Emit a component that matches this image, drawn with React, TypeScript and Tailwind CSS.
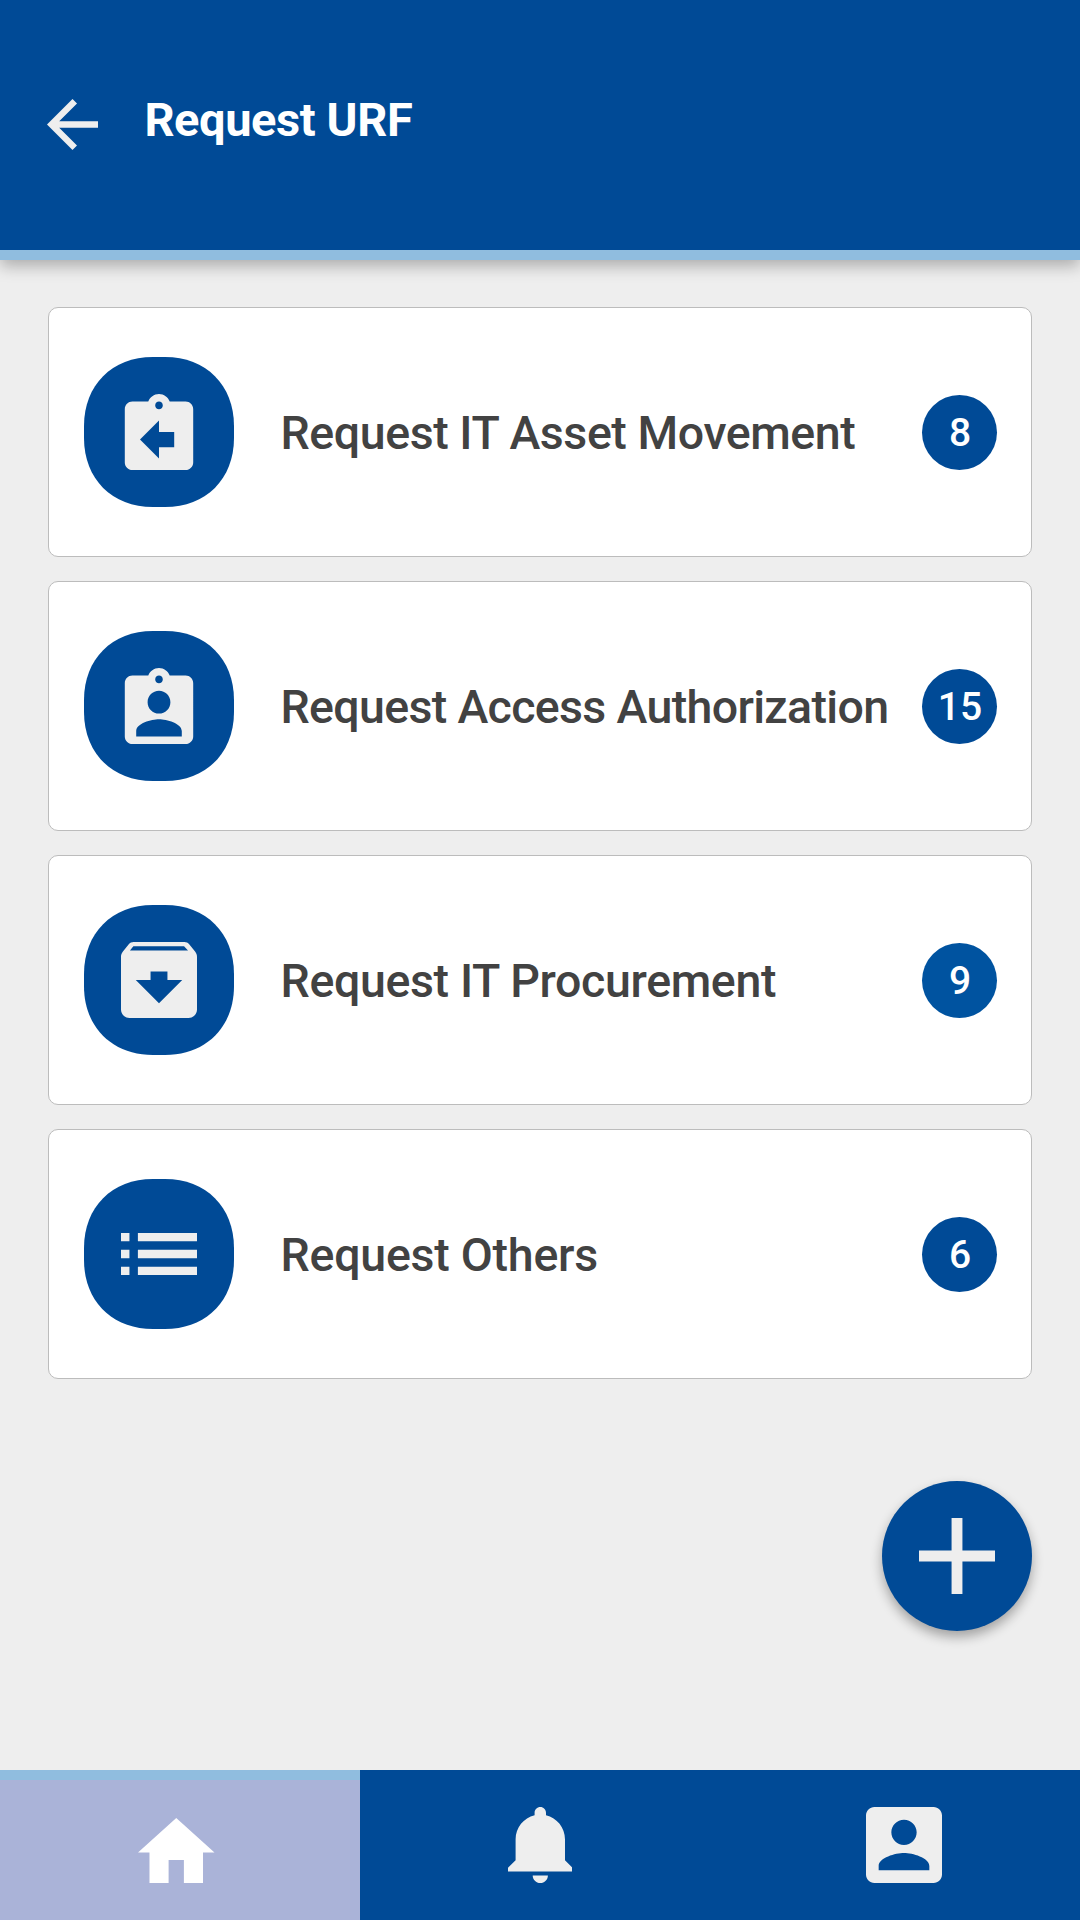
import React from "react";

const FONT = "font-['Roboto','Noto_Sans',sans-serif]";

type GlyphProps = { viewBox: string; d: string; className: string };

function Glyph({ viewBox, d, className }: GlyphProps) {
  return (
    <svg viewBox={viewBox} className={className} fill="currentColor" aria-hidden="true">
      <path d={d} />
    </svg>
  );
}

const CLIP =
  "M19 3h-4.18C14.4 1.84 13.3 1 12 1c-1.3 0-2.4.84-2.82 2H5c-1.1 0-2 .9-2 2v14c0 1.1.9 2 2 2h14c1.1 0 2-.9 2-2V5c0-1.1-.9-2-2-2zm-7 0c.55 0 1 .45 1 1s-.45 1-1 1-1-.45-1-1 .45-1 1-1z";

const items = [
  {
    label: "Request IT Asset Movement",
    count: 8,
    viewBox: "2 1 20 20",
    d: CLIP + "m4 12h-4v3l-5-5 5-5v3h4v4z",
    tracking: "tracking-[-0.42px]",
    badge: "bg-[#004a96]",
  },
  {
    label: "Request Access Authorization",
    count: 15,
    viewBox: "2 1 20 20",
    d: CLIP + "m0 4c1.66 0 3 1.34 3 3s-1.34 3-3 3-3-1.34-3-3 1.34-3 3-3zm6 12H6v-1.4c0-2 4-3.1 6-3.1s6 1.1 6 3.1V19z",
    tracking: "tracking-[-0.66px]",
    badge: "bg-[#004a96]",
  },
  {
    label: "Request IT Procurement",
    count: 9,
    viewBox: "3 3 18 18",
    d: "M20.54 5.23l-1.39-1.68C18.88 3.21 18.47 3 18 3H6c-.47 0-.88.21-1.16.55L3.46 5.23C3.17 5.57 3 6.02 3 6.5V19c0 1.1.9 2 2 2h14c1.1 0 2-.9 2-2V6.5c0-.48-.17-.93-.46-1.27zM12 17.5L6.5 12H10v-2h4v2h3.5L12 17.5zM5.12 5l.81-1h12l.94 1H5.12z",
    tracking: "tracking-[-0.35px]",
    badge: "bg-[#0053a0]",
  },
  {
    label: "Request Others",
    count: 6,
    viewBox: "3 3 18 18",
    d: "M3 13h2v-2H3v2zm0 4h2v-2H3v2zm0-8h2V7H3v2zm4 4h14v-2H7v2zm0 4h14v-2H7v2zM7 7v2h14V7H7z",
    tracking: "tracking-[-0.24px]",
    badge: "bg-[#004a96]",
  },
];

function SquircleIcon({ viewBox, d }: { viewBox: string; d: string }) {
  return (
    <div className="grid size-[150px] shrink-0 place-items-center">
      <svg viewBox="0 0 150 150" className="col-start-1 row-start-1 size-[150px] text-[#004a96]" fill="currentColor" aria-hidden="true">
        <path d="M69 0H81C122 0 150 28 150 69V81C150 122 122 150 81 150H69C28 150 0 122 0 81V69C0 28 28 0 69 0Z" />
      </svg>
      <Glyph viewBox={viewBox} d={d} className="col-start-1 row-start-1 size-[76px] text-[#eeeeee]" />
    </div>
  );
}

export default function App() {
  return (
    <div className={`flex h-[1920px] w-[1080px] flex-col overflow-hidden bg-[#eeeeee] ${FONT}`}>
      <header className="z-10 flex h-[260px] shrink-0 items-start border-b-[10px] border-[#90bddf] bg-[#004a96] pl-[47.4px] shadow-[0_6px_15px_rgba(0,0,0,0.28)]">
        <button className="mt-[99.4px]" aria-label="Back">
          <Glyph
            viewBox="4 4 16 16"
            d="M20 11H7.83l5.59-5.59L12 4l-8 8 8 8 1.41-1.41L7.83 13H20v-2z"
            className="size-[51px] text-[#eeeeee]"
          />
        </button>
        <h1 className="mt-[92px] ml-[46px] text-[47px] leading-[56px] font-bold tracking-[-0.4px] whitespace-nowrap text-white">
          Request URF
        </h1>
      </header>

      <main className="flex flex-1 flex-col px-12 pt-[47px]">
        <ul className="flex flex-col gap-6">
          {items.map((item) => (
            <li
              key={item.label}
              className="flex h-[250px] items-center rounded-[10px] border border-[#bcbcbc] bg-white pr-[34px] pl-[35px]"
            >
              <SquircleIcon viewBox={item.viewBox} d={item.d} />
              <span className={`ml-[46.5px] flex-1 pt-0.5 text-[46.5px] leading-[56px] font-medium whitespace-nowrap text-[#424242] ${item.tracking}`}>
                {item.label}
              </span>
              <span className={`flex size-[75px] shrink-0 items-center justify-center rounded-full pt-0.5 pl-px text-[39px] leading-none font-medium text-white ${item.badge}`}>
                {item.count}
              </span>
            </li>
          ))}
        </ul>
        <button
          aria-label="Add request"
          className="mt-[102px] flex size-[150px] items-center justify-center self-end rounded-full bg-[#004a96] shadow-[0_6px_12px_rgba(0,0,0,0.32)]"
        >
          <Glyph viewBox="5 5 14 14" d="M19 13h-6v6h-2v-6H5v-2h6V5h2v6h6v2z" className="size-[76px] text-[#eeeeee]" />
        </button>
      </main>

      <nav className="grid h-[150px] shrink-0 grid-cols-3 bg-[#004a96] text-[#eeeeee]">
        <button aria-label="Home" className="flex items-start justify-center border-t-[10px] border-[#90bddf] bg-[#aab3d8] pt-[38px] pr-[7px] text-white">
          <Glyph viewBox="2 3 20 17" d="M10 20v-6h4v6h5v-8h3L12 3 2 12h3v8z" className="h-[65px] w-[76.5px]" />
        </button>
        <button aria-label="Notifications" className="flex items-center justify-center">
          <Glyph
            viewBox="3 2 17 20"
            d="M11.5 22c1.1 0 2-.9 2-2h-4c0 1.1.9 2 2 2zm6.5-6v-5.5c0-3.07-2.13-5.64-5-6.32V3.5c0-.83-.67-1.5-1.5-1.5S10 2.67 10 3.5v.68c-2.87.68-5 3.25-5 6.32V16l-2 2v1h17v-1l-2-2z"
            className="h-[76px] w-[64.6px]"
          />
        </button>
        <button aria-label="Account" className="flex items-center justify-center pl-2">
          <Glyph
            viewBox="3 3 18 18"
            d="M3 5v14c0 1.1.89 2 2 2h14c1.1 0 2-.9 2-2V5c0-1.1-.9-2-2-2H5c-1.11 0-2 .9-2 2zm12 4c0 1.66-1.34 3-3 3s-3-1.34-3-3 1.34-3 3-3 3 1.34 3 3zm-9 8c0-2 4-3.1 6-3.1s6 1.1 6 3.1v1H6v-1z"
            className="size-[76px]"
          />
        </button>
      </nav>
    </div>
  );
}
